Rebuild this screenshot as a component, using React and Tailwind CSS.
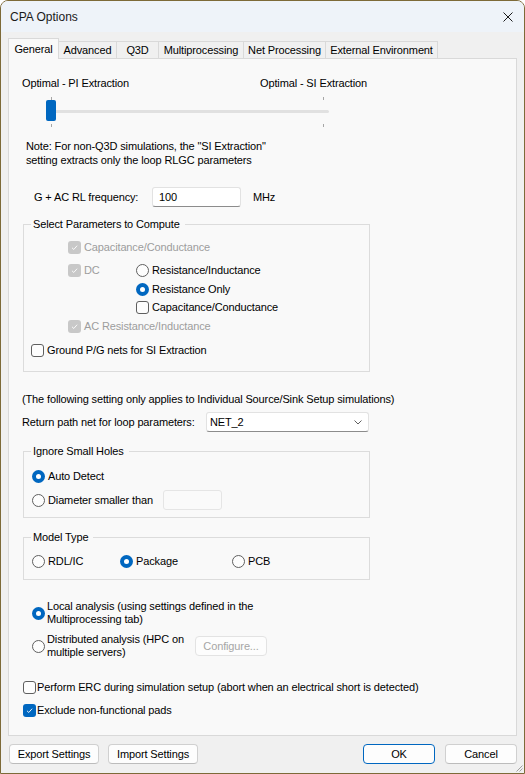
import clsx from 'clsx'

function Box({ checked = false, disabled = false }) {
  return (
    <span
      className={clsx(
        'flex h-[13px] w-[13px] shrink-0 items-center justify-center rounded-[3px]',
        checked
          ? disabled
            ? 'bg-[#c8c8c8]'
            : 'bg-[#0067c0]'
          : 'border border-[#5f5f5f] bg-[#fdfdfd]'
      )}
    >
      {checked && (
        <svg viewBox="0 0 10 10" className="h-[9px] w-[9px]">
          <path d="M2.2 5.3 4.2 7.2 7.9 3" fill="none" stroke="#fff" strokeWidth="1" />
        </svg>
      )}
    </span>
  )
}

function Dot({ checked = false }) {
  if (checked) {
    return (
      <span className="flex h-[13px] w-[13px] shrink-0 items-center justify-center rounded-full bg-[#0067c0]">
        <span className="h-[5px] w-[5px] rounded-full bg-white" />
      </span>
    )
  }
  return <span className="h-[13px] w-[13px] shrink-0 rounded-full border border-[#5f5f5f] bg-[#fdfdfd]" />
}

function Option({ radio = false, checked, disabled, label, className }) {
  return (
    <div className={clsx('flex items-center gap-[3px]', className)}>
      {radio ? <Dot checked={checked} /> : <Box checked={checked} disabled={disabled} />}
      <span className={clsx('whitespace-nowrap', disabled ? 'text-[#9d9d9d]' : 'text-black')}>{label}</span>
    </div>
  )
}

function Group({ title, className, children }) {
  return (
    <fieldset className={clsx('ml-[14px] w-[347px] border border-[#dcdcdc]', className)}>
      <legend className="ml-[7px] pl-[2px] pr-[5px] leading-[14px]">{title}</legend>
      {children}
    </fieldset>
  )
}

function Button({ children, primary, className }) {
  return (
    <button
      type="button"
      className={clsx(
        'flex h-[20px] items-center justify-center rounded-[4px] border bg-[#fdfdfd] text-black',
        primary ? 'border-[#0067c0]' : 'border-[#d0d0d0] border-b-[#bcbcbc]',
        className
      )}
    >
      {children}
    </button>
  )
}

const tabs = ['General', 'Advanced', 'Q3D', 'Multiprocessing', 'Net Processing', 'External Environment']
const tabWidths = ['w-[51px]', 'w-[58px]', 'w-[42px]', 'w-[85px]', 'w-[82px]', 'w-[112px]']

export default function App() {
  return (
    <div className="relative flex h-[774px] w-[525px] flex-col overflow-hidden rounded-t-[8px] border border-[#7d6a38] bg-[#f0f0f0] font-['Liberation_Sans',Arial,sans-serif] text-[11px] tracking-[-0.13px] text-black">
      <div className="flex h-[31px] shrink-0 items-center justify-between bg-[#eef3f9] pl-[9px] pr-[11px]">
        <span className="text-[12px] tracking-normal text-[#1a1a1a]">CPA Options</span>
        <svg viewBox="0 0 10 10" className="h-[10px] w-[10px]">
          <path d="M0.5 0.5 9.5 9.5M9.5 0.5 0.5 9.5" stroke="#1a1a1a" strokeWidth="1" />
        </svg>
      </div>

      <div className="relative z-10 mt-[6px] flex h-[20px] items-end pl-[7px]">
        {tabs.map((tab, i) => (
          <div
            key={tab}
            className={clsx(
              'flex items-center justify-center whitespace-nowrap border-r border-t border-[#d9d9d9]',
              tabWidths[i],
              i === 0 ? '-mb-px h-[21px] border-l bg-[#f9f9f9]' : 'h-[17px] bg-[#f0f0f0]'
            )}
          >
            {tab}
          </div>
        ))}
      </div>

      <div className="mx-[7px] flex h-[678px] shrink-0 flex-col border border-[#d9d9d9] bg-[#f9f9f9]">
        <div className="mt-[17px] flex h-[14px] items-center pl-[13px]">
          <span className="w-[238px]">Optimal - PI Extraction</span>
          <span>Optimal - SI Extraction</span>
        </div>

        <div className="relative ml-[37px] mt-[7px] h-[30px] w-[284px]">
          <span className="absolute left-[5px] top-0 h-[3px] w-px bg-[#a6a6a6]" />
          <span className="absolute left-[277px] top-0 h-[3px] w-px bg-[#a6a6a6]" />
          <span className="absolute left-[5px] top-[27px] h-[3px] w-px bg-[#a6a6a6]" />
          <span className="absolute left-[277px] top-[27px] h-[3px] w-px bg-[#a6a6a6]" />
          <span className="absolute left-px top-[13px] h-[3px] w-[282px] rounded-full bg-[#e1e1e1]" />
          <span className="absolute left-0 top-[3px] h-[21px] w-[10px] rounded-[2px] bg-[#0067c0]" />
        </div>

        <p className="mt-[12px] pl-[17px] leading-[14px]">
          Note: For non-Q3D simulations, the "SI Extraction"
          <br />
          setting extracts only the loop RLGC parameters
        </p>

        <div className="mt-[20px] flex h-[20px] items-center pl-[25px]">
          <span className="w-[118px]">G + AC RL frequency:</span>
          <div className="flex h-[20px] w-[89px] items-center rounded-[3px] border border-[#e2e2e2] border-b-[#8c8c8c] bg-white pl-[6px]">
            100
          </div>
          <span className="ml-[12px]">MHz</span>
        </div>

        <Group title="Select Parameters to Compute" className="mt-[10px] pb-[12px]">
          <Option checked disabled label="Capacitance/Conductance" className="mt-[7px] h-[18px] pl-[44px]" />
          <div className="mt-[5px] flex h-[18px] items-center pl-[44px]">
            <Option checked disabled label="DC" className="w-[68px]" />
            <Option radio label="Resistance/Inductance" />
          </div>
          <Option radio checked label="Resistance Only" className="mt-px h-[18px] pl-[112px]" />
          <Option label="Capacitance/Conductance" className="h-[18px] pl-[112px]" />
          <Option checked disabled label="AC Resistance/Inductance" className="mt-px h-[18px] pl-[44px]" />
          <Option label="Ground P/G nets for SI Extraction" className="mt-[6px] h-[18px] pl-[7px]" />
        </Group>

        <p className="mt-[20px] flex h-[14px] items-center pl-[13px]">
          (The following setting only applies to Individual Source/Sink Setup simulations)
        </p>
        <div className="mt-[6px] flex h-[20px] items-center pl-[13px]">
          <span className="w-[184px]">Return path net for loop parameters:</span>
          <div className="flex h-[20px] w-[163px] items-center justify-between rounded-[3px] border border-[#e2e2e2] border-b-[#8c8c8c] bg-white pl-[3px] pr-[6px]">
            <span>NET_2</span>
            <svg viewBox="0 0 8 5" className="h-[5px] w-[8px]">
              <path d="M0.5 0.5 4 4 7.5 0.5" fill="none" stroke="#5f5f5f" strokeWidth="1" />
            </svg>
          </div>
        </div>

        <Group title="Ignore Small Holes" className="mt-[12px] pb-[7px]">
          <Option radio checked label="Auto Detect" className="mt-[9px] h-[18px] pl-[8px]" />
          <div className="mt-[5px] flex h-[20px] items-center pl-[8px]">
            <Option radio label="Diameter smaller than" className="w-[131px]" />
            <div className="h-[20px] w-[59px] rounded-[3px] border border-[#e5e5e5] bg-[#fafafa]" />
          </div>
        </Group>

        <Group title="Model Type" className="mt-[12px] pb-[9px]">
          <div className="mt-[8px] flex h-[18px] items-center pl-[8px]">
            <Option radio label="RDL/IC" className="w-[88px]" />
            <Option radio checked label="Package" className="w-[112px]" />
            <Option radio label="PCB" />
          </div>
        </Group>

        <div className="mt-[20px] flex items-center gap-[2px] pl-[23px]">
          <Dot checked />
          <span className="leading-[13px]">
            Local analysis (using settings defined in the
            <br />
            Multiprocessing tab)
          </span>
        </div>
        <div className="mt-[7px] flex h-[26px] items-center pl-[23px]">
          <div className="flex w-[163px] items-center gap-[2px]">
            <Dot />
            <span className="leading-[13px]">
              Distributed analysis (HPC on
              <br />
              multiple servers)
            </span>
          </div>
          <Button className="w-[72px] border-[#e3e3e3] !border-b-[#e3e3e3] bg-[#fbfbfb] !text-[#a6a6a6]">Configure...</Button>
        </div>

        <Option label="Perform ERC during simulation setup (abort when an electrical short is detected)" className="mt-[19px] h-[18px] !gap-[1px] pl-[14px]" />
        <Option checked label="Exclude non-functional pads" className="mt-[5px] h-[18px] !gap-[1px] pl-[14px]" />
      </div>

      <div className="mt-[8px] flex pl-[8px] pr-[7px]">
        <Button className="w-[90px]">Export Settings</Button>
        <Button className="ml-[9px] w-[90px]">Import Settings</Button>
        <Button primary className="ml-auto w-[72px]">OK</Button>
        <Button className="ml-[10px] w-[72px]">Cancel</Button>
      </div>

      <svg viewBox="0 0 9 9" className="absolute bottom-px right-px h-[9px] w-[9px]">
        <path d="M8.5 2.5 2.5 8.5M8.5 5.5 5.5 8.5" stroke="#a0a0a0" strokeWidth="1" />
      </svg>
    </div>
  )
}
